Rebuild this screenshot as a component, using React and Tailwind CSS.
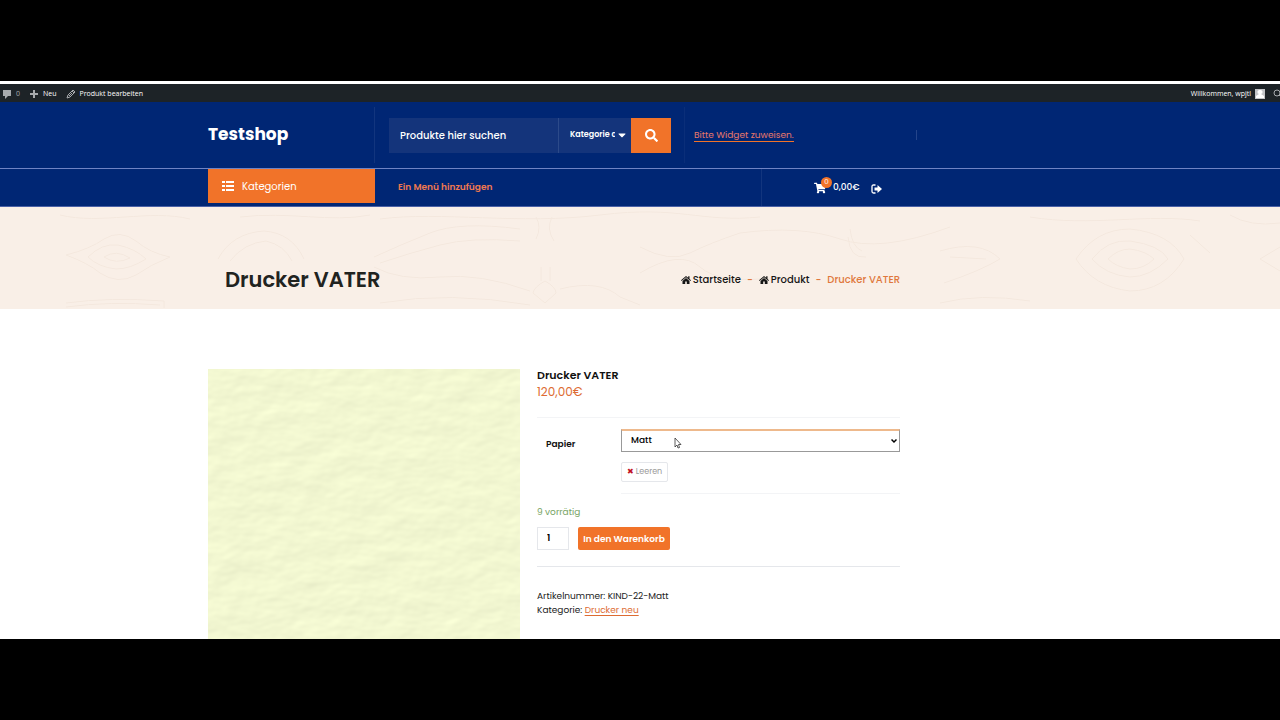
import {FaSearch, FaShoppingCart, FaCaretDown} from "react-icons/fa";

const woodPaths = [
    "M60 8C100 18 150 2 190 12M240 10C290 4 330 16 370 8M380 12C440 4 520 18 600 8S700 16 760 10",
    "M66 48Q90 42 104 32Q120 22 136 34Q150 46 170 50Q150 58 136 68Q118 78 100 66Q88 56 66 48Z",
    "M88 50Q102 36 118 38Q136 42 146 52Q130 62 116 62Q98 60 88 50ZM104 50Q116 42 130 51Q116 58 104 50Z",
    "M218 52Q232 26 264 24Q292 26 304 52M230 54Q244 36 266 34Q284 38 292 54",
    "M374 50Q400 38 430 26T520 22M380 56Q410 46 440 38T520 34M374 60Q400 74 440 70T530 84",
    "M545 74Q556 80 556 86L545 96L533 86Q534 80 545 74ZM541 60V74M550 60V74M536 10Q542 20 536 32M552 10Q546 22 554 34",
    "M66 96Q110 90 164 94V101M66 100Q110 94 160 98M380 96Q450 84 530 98M560 82Q600 72 620 90L640 98",
    "M640 40Q670 56 690 46T740 26Q800 18 840 32T950 20M640 66Q680 42 700 60T780 70",
    "M850 22Q852 40 862 44M848 30Q850 52 866 50M940 44Q980 32 1000 52Q980 64 944 76M950 50L986 52",
    "M1092 52Q1108 32 1130 34Q1160 38 1168 52Q1150 70 1130 70Q1106 68 1092 52Z",
    "M1108 52Q1118 42 1130 42Q1146 44 1154 52Q1144 62 1130 62Q1116 60 1108 52Z",
    "M1076 52Q1096 22 1130 22Q1170 26 1184 52Q1164 84 1130 84Q1094 80 1076 52Z",
    "M940 96Q980 86 1030 94M1030 10C1090 20 1150 6 1200 14M1230 8Q1250 20 1280 16M1190 28L1210 46M1260 52L1280 40M1260 52L1280 64",
];

function WoodPattern() {
    return (
        <svg className="absolute inset-0 h-full w-full" fill="none" stroke="#f4e8de" aria-hidden="true">
            <defs>
                <pattern id="wood" width="1280" height="102" patternUnits="userSpaceOnUse">
                    {woodPaths.map((d) => <path key={d} d={d}/>)}
                </pattern>
            </defs>
            <rect width="100%" height="100%" fill="url(#wood)" stroke="none"/>
        </svg>
    );
}

function PaperTexture() {
    return (
        <svg className="h-96 w-full" role="img" aria-label="Drucker VATER">
            <filter id="paper" x="0" y="0" width="100%" height="100%" colorInterpolationFilters="sRGB">
                <feTurbulence type="fractalNoise" baseFrequency="0.03 0.05" numOctaves="3" seed="8"/>
                <feDiffuseLighting lightingColor="#f8fdd6" surfaceScale="0.35" diffuseConstant="1.15">
                    <feDistantLight azimuth="235" elevation="58"/>
                </feDiffuseLighting>
            </filter>
            <rect width="100%" height="100%" filter="url(#paper)"/>
        </svg>
    );
}

function HomeIcon() {
    return (
        <svg className="h-2.5 w-2.5" viewBox="0 0 10 10" fill="currentColor" aria-hidden="true">
            <path d="M5 1L0 5.200l.6.7L5 2.300l4.400 3.600.6-.7-1.500-1.300V1.300H7.200v1.500z"/>
            <path d="M5 3L1.500 6v3h2.700V6.500h1.600V9h2.700V6z"/>
        </svg>
    );
}

function AdminBar() {
    return (
        <div className="flex h-[18px] shrink-0 items-center bg-[#1d2327] pt-0.5 font-['Open_Sans','Noto_Sans',sans-serif] text-[7px] text-white">
            <a href="#comments" className="flex items-center gap-1 pl-0.5 text-[#a7aaad]">
                <svg className="h-2.5 w-2.5" viewBox="0 0 10 10" fill="currentColor"><path d="M1 1h8v6H6L3 10V7H1z"/></svg>
                0
            </a>
            <a href="#new" className="flex items-center gap-1 pl-[9px]">
                <svg className="h-2.5 w-2.5" viewBox="0 0 10 10" stroke="#a7aaad" strokeWidth="2"><path d="M5 1v8M1 5h8"/></svg>
                Neu
            </a>
            <a href="#edit" className="flex items-center gap-1 pl-[9px]">
                <svg className="h-2.5 w-2.5" viewBox="0 0 10 10" fill="none" stroke="#a7aaad"><path d="M1 9l1-3 5-5 2 2-5 5zM6 2l2 2M3 7l3-3"/></svg>
                Produkt bearbeiten
            </a>
            <a href="#profile" className="ml-auto flex items-center gap-1">
                Willkommen, wpjtl
                <svg className="h-2.5 w-2.5" viewBox="0 0 10 10"><path fill="#c3c4c7" d="M0 0h10v10H0z"/><path fill="#fff" d="M5 1a2 2 0 0 1 1 4l3 2v2H1V7l3-2a2 2 0 0 1 1-4z"/></svg>
            </a>
            <button aria-label="Suchen" className="ml-2 w-[7px] overflow-hidden">
                <svg className="h-2.5 w-2.5" viewBox="0 0 10 10" fill="none" stroke="#a7aaad"><circle cx="4" cy="4" r="3"/><path d="M6 6l3 3"/></svg>
            </button>
        </div>
    );
}

function Header() {
    return (
        <header className="shrink-0 bg-[#002674] text-white">
            <div className="border-b border-[#6f83c4]">
                <div className="ml-52 flex h-[66px] max-w-[709px] items-center">
                    <div className="flex h-14 w-[167px] items-center border-r border-[#12357e]">
                        <a href="#home" className="text-[17px] font-bold">Testshop</a>
                    </div>
                    <form className="ml-3.5 flex h-[35px] w-[282px]">
                        <input
                            aria-label="Produkte hier suchen"
                            placeholder="Produkte hier suchen"
                            className="min-w-0 flex-1 bg-[#14347b] px-[11px] text-[10px] font-medium placeholder:text-white"
                        />
                        <div className="relative w-[73px] border-l border-[#2c4a8a] bg-[#14347b]">
                            <select aria-label="Kategorie" className="h-full w-14 appearance-none overflow-hidden pl-[11px] text-[8px] font-semibold">
                                <option>Kategorie auswählen</option>
                            </select>
                            <FaCaretDown className="pointer-events-none absolute right-[3px] top-[11px] h-3 w-3"/>
                        </div>
                        <button type="button" aria-label="Suchen" className="flex w-10 items-center justify-center bg-[#f17329]">
                            <FaSearch className="h-[13px] w-[13px]"/>
                        </button>
                    </form>
                    <div className="ml-[13px] flex h-14 items-center border-l border-[#0a2e79] pl-[9px]">
                        <a href="#widget" className="border-b border-[#f17329] text-[9px] leading-3 text-[#e9786a]">Bitte Widget zuweisen.</a>
                    </div>
                    <div className="ml-auto h-2.5 w-px bg-[#24448a]"/>
                </div>
            </div>
            <div className="border-b border-[#4a61a6]">
                <div className="ml-52 flex h-[37px] max-w-[692px]">
                    <button className="flex h-[34px] w-[167px] items-center gap-2 bg-[#f17329] pl-3.5 text-[10px]">
                        <svg className="h-3 w-3" viewBox="0 0 12 12" fill="currentColor"><path d="M0 1h3v2H0zM4 1h8v2H4zM0 5h3v2H0zM4 5h8v2H4zM0 9h3v2H0zM4 9h8v2H4z"/></svg>
                        Kategorien
                    </button>
                    <a href="#menu" className="ml-[23px] self-center text-[9px] font-semibold text-[#f0794f]">Ein Menü hinzufügen</a>
                    <div className="ml-auto flex w-[139px] items-center border-l border-[#12357e] pl-[52px]">
                        <a href="#cart" className="relative flex items-center gap-[7px] text-[9px] font-medium">
                            <FaShoppingCart className="h-3 w-3"/>
                            <span className="absolute -top-1 left-[7px] flex h-[11px] w-[11px] items-center justify-center rounded-full bg-[#f17329] text-[7px] font-normal">0</span>
                            0,00€
                        </a>
                        <a href="#logout" aria-label="Abmelden" className="ml-[11px] pt-0.5">
                            <svg className="h-2.5 w-[11px]" viewBox="0 0 11 10" fill="currentColor">
                                <path d="M4.500 1H2.500Q1 1 1 2.500v5Q1 9 2.500 9h2" fill="none" stroke="currentColor" strokeWidth="1.300"/>
                                <path d="M3.500 3.500h3V1L11 5 6.500 9V6.500h-3z"/>
                            </svg>
                        </a>
                    </div>
                </div>
            </div>
        </header>
    );
}

function Banner() {
    return (
        <section className="relative h-[102px] shrink-0 bg-[#f9efe7]">
            <WoodPattern/>
            <div className="relative ml-[225px] flex h-full max-w-[675px] items-end justify-between pb-[17px]">
                <h1 className="text-[21px] leading-6 font-semibold text-[#21231f]">Drucker VATER</h1>
                <nav className="flex items-center gap-1.5 text-[10px] leading-6 font-medium text-[#151515]">
                    <a href="#home" className="flex items-center gap-0.5"><HomeIcon/>Startseite</a>
                    <span className="text-[#e0783c]">-</span>
                    <a href="#product" className="flex items-center gap-0.5"><HomeIcon/>Produkt</a>
                    <span className="text-[#e0783c]">-</span>
                    <span className="text-[#e0783c]">Drucker VATER</span>
                </nav>
            </div>
        </section>
    );
}

function Product() {
    return (
        <main className="ml-52 flex max-w-[692px] items-start gap-[17px] pt-[60px]">
            <div className="w-[312px] shrink-0"><PaperTexture/></div>
            <div className="min-w-0 flex-1 text-[9px] leading-[14px] text-[#222]">
                <h2 className="text-[11px] leading-3 font-semibold text-[#111]">Drucker VATER</h2>
                <p className="mt-1 text-[12px] leading-[14px] text-[#dd6b32]">120,00€</p>
                <div className="mt-[18px] flex border-t border-gray-100 pt-[11px]">
                    <label htmlFor="papier" className="w-[84px] pl-[9px] pt-2 font-semibold text-[#111]">Papier</label>
                    <div className="relative flex-1 border-b border-gray-100 pb-[11px]">
                        <select id="papier" className="block h-[23px] w-full appearance-none border-x border-t-2 border-b border-x-[#999] border-t-[#eeb98c] border-b-[#999] bg-white pb-0.5 pl-[9px] text-[9px] font-medium text-black">
                            <option>Matt</option>
                        </select>
                        <svg className="pointer-events-none absolute right-[3px] top-[9px] h-1.5 w-1.5" viewBox="0 0 6 6" fill="none" stroke="#000" strokeWidth="1.500"><path d="M.5 1.500L3 4l2.500-2.500"/></svg>
                        <svg className="pointer-events-none absolute left-[53px] top-2 h-3 w-2" viewBox="0 0 8 12" fill="#fff" stroke="#333" strokeWidth=".8"><path d="M1 1v9l2-2 1 3 1.500-.5-1-3H7z"/></svg>
                        <button className="mt-2.5 flex h-5 w-[47px] items-center justify-center gap-0.5 rounded-xs border border-gray-200 text-[8px] text-[#999]">
                            <span className="text-[8px] text-[#c1121f]">✖</span>Leeren
                        </button>
                    </div>
                </div>
                <p className="mt-[11px] text-[#77a464]">9 vorrätig</p>
                <form className="mt-2 flex gap-[9px] border-b border-gray-200 pb-4">
                    <input aria-label="Menge" defaultValue="1" className="h-[23px] w-8 border border-gray-200 pl-[9px] text-[9px] font-semibold text-black"/>
                    <button type="button" className="h-[23px] w-[92px] rounded-xs bg-[#f17329] text-[9px] font-semibold text-white">In den Warenkorb</button>
                </form>
                <p className="mt-[22px]">Artikelnummer: KIND-22-Matt</p>
                <p>Kategorie: <a href="#drucker" className="text-[#dd6b32] underline underline-offset-2">Drucker neu</a></p>
            </div>
        </main>
    );
}

export default function App() {
    return (
        <div className="h-screen bg-black pt-[81px] pb-[81px] font-[Poppins,Inter,sans-serif]">
            <div className="flex h-full flex-col overflow-hidden bg-white pt-[3px]">
                <AdminBar/>
                <Header/>
                <Banner/>
                <Product/>
            </div>
        </div>
    );
}
